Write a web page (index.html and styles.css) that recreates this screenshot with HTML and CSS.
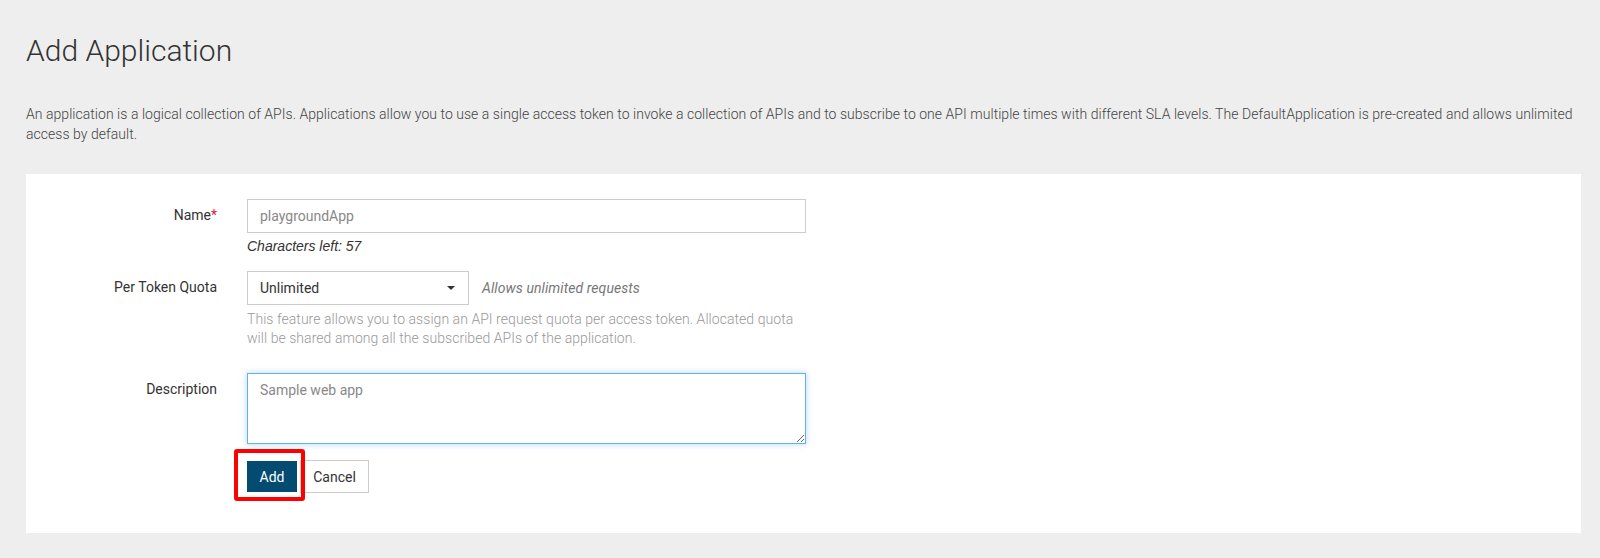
FILE: index.html
```html
<!DOCTYPE html>
<html lang="en">
<head>
<meta charset="utf-8">
<title>Add Application</title>
<link rel="stylesheet" href="styles.css">
</head>
<body>
<div class="page">
  <h1 class="title">Add Application</h1>
  <p class="intro">An application is a logical collection of APIs. Applications allow you to use a single access token to invoke a collection of APIs and to subscribe to one API multiple times with different SLA levels. The DefaultApplication is pre-created and allows unlimited access by default.</p>
  <div class="panel">
    <form class="form">
      <div class="form-row">
        <label class="control-label">Name<span class="req">*</span></label>
        <div class="control">
          <div class="input">playgroundApp</div>
          <div class="chars-left">Characters left: 57</div>
        </div>
      </div>
      <div class="form-row">
        <label class="control-label">Per Token Quota</label>
        <div class="control">
          <div class="select-line">
            <div class="select">
              <span>Unlimited</span>
              <svg class="caret" width="8" height="4" viewBox="0 0 8 4"><path d="M0 0h8L4 4z" fill="#333"/></svg>
            </div>
            <span class="quota-note">Allows unlimited requests</span>
          </div>
          <div class="help">This feature allows you to assign an API request quota per access token. Allocated quota will be shared among all the subscribed APIs of the application.</div>
        </div>
      </div>
      <div class="form-row">
        <label class="control-label">Description</label>
        <div class="control">
          <textarea class="textarea" placeholder="Sample web app"></textarea>
          <div class="buttons">
            <span class="btn-wrap">
              <button type="button" class="btn btn-primary">Add</button>
              <span class="highlight"></span>
            </span>
            <button type="button" class="btn btn-default">Cancel</button>
          </div>
        </div>
      </div>
    </form>
  </div>
</div>
</body>
</html>
```

FILE: styles.css
```css
* { box-sizing: border-box; }
html, body { margin: 0; padding: 0; }
body {
  background: #eeeeee;
  font-family: Roboto, "Liberation Sans", Arial, sans-serif;
  font-size: 14px;
  color: #333;
  width: 1600px;
  height: 558px;
  overflow: hidden;
}
.page {
  padding: 33px 19px 0 26px;
}
.title {
  margin: 0 0 35px;
  font-size: 30px;
  line-height: 36px;
  font-weight: 300;
  color: #333;
}
.intro {
  margin: 0 0 30px;
  font-size: 14px;
  line-height: 20px;
  font-weight: 300;
  letter-spacing: 0.04px;
  color: #444;
}
.panel {
  background: #fff;
  padding: 25px 0 40px;
}
.form-row {
  display: grid;
  grid-template-columns: 191px 559px;
  column-gap: 30px;
  margin-bottom: 15px;
}
.form-row:last-child { margin-bottom: 0; }
.control-label {
  text-align: right;
  padding-top: 6px;
  line-height: 20px;
  color: #333;
}
.req { color: #e0202a; }
.input {
  height: 34px;
  border: 1px solid #ccc;
  padding: 6px 12px;
  line-height: 20px;
  color: #888;
}
.chars-left {
  margin-top: 3px;
  line-height: 20px;
  font-family: "Liberation Sans", Arial, sans-serif;
  font-style: italic;
  color: #333;
}
.select-line {
  display: flex;
  align-items: center;
}
.select {
  width: 222px;
  height: 34px;
  border: 1px solid #ccc;
  padding: 6px 12px;
  line-height: 20px;
  display: flex;
  align-items: center;
  justify-content: space-between;
  color: #333;
}
.caret { margin-right: 1px; }
.quota-note {
  margin-left: 13px;
  font-style: italic;
  font-weight: 400;
  letter-spacing: 0.08px;
  color: #777;
}
.help {
  margin-top: 5px;
  margin-bottom: 10px;
  line-height: 19px;
  font-weight: 300;
  letter-spacing: 0.05px;
  color: #999;
}
.textarea {
  display: block;
  width: 559px;
  height: 71px;
  border: 1px solid #66afe9;
  box-shadow: 0 0 6px rgba(102, 175, 233, 0.5);
  outline: none;
  padding: 6px 12px;
  font-family: Roboto, sans-serif;
  font-size: 14px;
  line-height: 20px;
  color: #333;
  resize: both;
  margin: 0;
}
.textarea::placeholder { color: #888; }
.buttons {
  margin-top: 16px;
  display: flex;
  align-items: center;
  gap: 3px;
}
.btn-wrap {
  position: relative;
  display: inline-flex;
}
.btn {
  font-family: Roboto, sans-serif;
  font-size: 14px;
  line-height: 20px;
  cursor: pointer;
}
.btn-primary {
  width: 50px;
  height: 31px;
  background: #044b71;
  border: 1px solid #044b71;
  color: #fff;
  padding: 0;
}
.btn-default {
  width: 69px;
  height: 33px;
  background: #fff;
  border: 1px solid #ccc;
  color: #333;
  padding: 0;
}
.highlight {
  position: absolute;
  left: -13px;
  top: -12px;
  width: 71px;
  height: 52px;
  border: 4px solid #ff0000;
  border-radius: 3px;
  pointer-events: none;
}
```
